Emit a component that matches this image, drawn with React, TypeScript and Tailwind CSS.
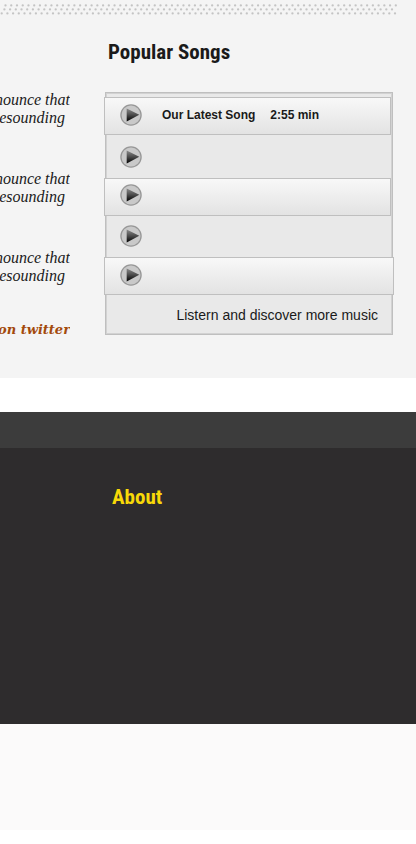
import React from "react";

const NEWS = [
  ["nounce that", "esounding"],
  ["nounce that", "esounding"],
  ["nounce that", "esounding"],
];

const DOT_ROWS = [
  { y: 5.4, start: 5.5, pitch: 5.74, count: 69 },
  { y: 9.4, start: 4.4, pitch: 5.7, count: 69 },
  { y: 13.4, start: 1.7, pitch: 5.7, count: 70 },
];

function DottedRule() {
  return (
    <svg width="400" height="16" aria-hidden="true" className="block max-w-full">
      {DOT_ROWS.map((row) =>
        Array.from({ length: row.count }, (_, i) => (
          <circle key={`${row.y}-${i}`} cx={row.start + i * row.pitch} cy={row.y} r="1.15" fill="#c4c4c4" />
        )),
      )}
    </svg>
  );
}

function PlayButton({ label, id }: { label: string; id: string }) {
  return (
    <button type="button" aria-label={label} className="block size-[22px] shrink-0 cursor-pointer">
      <svg width="22" height="22" viewBox="0 0 22 22" aria-hidden="true">
        <defs>
          <linearGradient id={id} x1="0" y1="0" x2="0" y2="1">
            <stop offset="0" stopColor="#8a8a8a" />
            <stop offset="0.5" stopColor="#4a4a4a" />
            <stop offset="1" stopColor="#000000" />
          </linearGradient>
        </defs>
        <circle cx="11" cy="11" r="10.1" fill="#c9c9c9" stroke="#979797" strokeWidth="1.3" />
        <path d="M6.7 4.6 L19.3 10.8 L6.7 17.4 Z" fill={`url(#${id})`} />
      </svg>
    </button>
  );
}

const RAISED = "relative -ml-[3px] flex h-[38px] items-center border border-[#bfbfbf] bg-linear-to-b from-[#f8f8f8] to-[#e3e3e3] pl-[15px]";

export default function App() {
  return (
    <div className="min-h-screen overflow-hidden bg-white font-['Liberation_Sans',Arial,sans-serif] text-[#1a1a1a]">
      <main className="bg-[#f4f4f4] pb-[39px]">
        <DottedRule />
        <div className="flex pr-[23px]">
          <section className="w-[70px] shrink-0 overflow-hidden pt-[75px] font-['Liberation_Serif',Georgia,serif]">
            {NEWS.map(([first, second], i) => (
              <p key={i} className="mb-[43px] flex flex-col items-end text-[16px] leading-[18px] whitespace-nowrap italic">
                <span>{first}</span>
                <span className="pr-[5px]">{second}</span>
              </p>
            ))}
            <a href="#twitter" className="-mt-[7px] flex justify-end font-['DejaVu_Serif',Georgia,serif] text-[13px] leading-[18px] font-bold whitespace-nowrap text-[#a34a0c] italic">
              on twitter
            </a>
          </section>

          <section className="ml-[35px] min-w-0 flex-1">
            <h2 className="mt-[20px] pl-[3px] font-['Roboto_Condensed','Roboto',sans-serif] text-[21px] leading-[32px] font-bold">
              Popular Songs
            </h2>
            <div className="mt-[24px] border border-[#bfbfbf] bg-[#e9e9e9]">
              <div className="border border-[#d2d2d2] pt-[3px]">
                <div className={`${RAISED} pb-[2px]`}>
                  <PlayButton id="play-1" label="Play Our Latest Song" />
                  <p className="ml-[20px] flex gap-[15px] text-[12px] leading-[16px] font-bold whitespace-nowrap">
                    <span>Our Latest Song</span>
                    <span>2:55 min</span>
                  </p>
                </div>
                <div className="flex h-[43px] items-center pl-[13px]">
                  <PlayButton id="play-2" label="Play song 2" />
                </div>
                <div className={`${RAISED} pb-[4px]`}>
                  <PlayButton id="play-3" label="Play song 3" />
                </div>
                <div className="flex h-[41px] items-center pb-[2px] pl-[13px]">
                  <PlayButton id="play-4" label="Play song 4" />
                </div>
                <div className={`${RAISED} -mr-[3px] pb-[2px]`}>
                  <PlayButton id="play-5" label="Play song 5" />
                </div>
                <div className="flex h-[38px] items-center justify-end pt-[2px] pr-[13px] text-[14px] leading-[20px]">
                  <a href="#music" className="whitespace-nowrap">Listern and discover more music</a>
                </div>
              </div>
            </div>
          </section>
        </div>
      </main>

      <footer className="mt-[34px]">
        <div className="h-[36px] bg-[#3c3c3c]" />
        <div className="h-[276px] bg-[#2e2c2d] pt-[33px] pl-[112px]">
          <h2 className="font-['Roboto_Condensed','Roboto',sans-serif] text-[21px] leading-[32px] font-bold text-[#f8d908]">
            About
          </h2>
        </div>
        <div className="h-[106px] bg-[#fbfafa]" />
      </footer>
    </div>
  );
}
